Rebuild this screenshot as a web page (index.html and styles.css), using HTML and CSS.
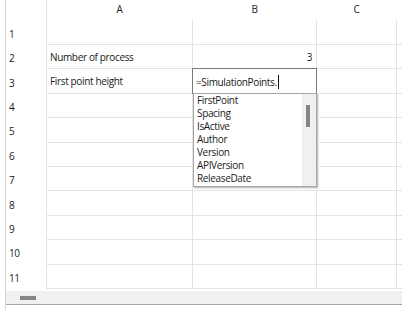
FILE: index.html
```html
<!DOCTYPE html>
<html>
<head>
<meta charset="utf-8">
<link rel="stylesheet" href="styles.css">
</head>
<body>
<div class="frame">
  <div class="sheet">
    <div class="row head">
      <div class="rh"></div>
      <div class="c ca">A</div>
      <div class="c cb">B</div>
      <div class="c cc">C</div>
      <div class="c cf"></div>
    </div>
    <div class="row r1">
      <div class="rh">1</div>
      <div class="c ca"></div>
      <div class="c cb"></div>
      <div class="c cc"></div>
      <div class="c cf"></div>
    </div>
    <div class="row">
      <div class="rh">2</div>
      <div class="c ca">Number of process</div>
      <div class="c cb num">3</div>
      <div class="c cc"></div>
      <div class="c cf"></div>
    </div>
    <div class="row">
      <div class="rh">3</div>
      <div class="c ca">First point height</div>
      <div class="c cb edit-host">
        <div class="editor">=SimulationPoints.<span class="caret"></span></div>
        <div class="dropdown">
          <ul class="items">
            <li>FirstPoint</li>
            <li>Spacing</li>
            <li>IsActive</li>
            <li>Author</li>
            <li>Version</li>
            <li>APIVersion</li>
            <li>ReleaseDate</li>
          </ul>
          <div class="track"><div class="thumb"></div></div>
        </div>
      </div>
      <div class="c cc"></div>
      <div class="c cf"></div>
    </div>
    <div class="row"><div class="rh">4</div><div class="c ca"></div><div class="c cb"></div><div class="c cc"></div><div class="c cf"></div></div>
    <div class="row"><div class="rh">5</div><div class="c ca"></div><div class="c cb"></div><div class="c cc"></div><div class="c cf"></div></div>
    <div class="row"><div class="rh">6</div><div class="c ca"></div><div class="c cb"></div><div class="c cc"></div><div class="c cf"></div></div>
    <div class="row"><div class="rh">7</div><div class="c ca"></div><div class="c cb"></div><div class="c cc"></div><div class="c cf"></div></div>
    <div class="row"><div class="rh">8</div><div class="c ca"></div><div class="c cb"></div><div class="c cc"></div><div class="c cf"></div></div>
    <div class="row"><div class="rh">9</div><div class="c ca"></div><div class="c cb"></div><div class="c cc"></div><div class="c cf"></div></div>
    <div class="row"><div class="rh">10</div><div class="c ca"></div><div class="c cb"></div><div class="c cc"></div><div class="c cf"></div></div>
    <div class="row"><div class="rh">11</div><div class="c ca"></div><div class="c cb"></div><div class="c cc"></div><div class="c cf"></div></div>
  </div>
  <div class="hscroll"><div class="hthumb"></div></div>
</div>
</body>
</html>
```
FILE: styles.css
```css
html, body {
  margin: 0;
  padding: 0;
  background: #ffffff;
}
body {
  width: 402px;
  height: 310px;
  overflow: hidden;
  font-family: "Open Sans", "Noto Sans", sans-serif;
  font-size: 10px;
  letter-spacing: -0.35px;
  color: #1a1a1a;
}
.frame {
  margin-left: 5px;
  border-left: 1px solid #d6d6d6;
  height: 310px;
  display: flex;
  flex-direction: column;
}
.sheet {
  display: flex;
  flex-direction: column;
  height: 291px;
  overflow: hidden;
}
.row {
  display: flex;
  height: 24.4px;
  flex: none;
}
.row.head {
  height: 20px;
}
.row.r1 {
  height: 25px;
}
.rh {
  flex: none;
  border-right: 1px solid #e3e3e3;
  display: flex;
  align-items: center;
  padding-left: 3px;
  box-sizing: border-box;
  width: 41px;
  padding-top: 2px;
}
.c {
  flex: none;
  box-sizing: border-box;
  border-right: 1px solid #e3e3e3;
  border-bottom: 1px solid #e3e3e3;
  display: flex;
  align-items: center;
  padding: 0 4px 0 3px;
  white-space: nowrap;
}
.ca { width: 146px; }
.cb { width: 124px; }
.cc { width: 80px; }
.cf { flex: 1; border-right: none; }
.head .c {
  border: none;
  justify-content: center;
  align-items: flex-start;
  padding-top: 2px;
}
.num {
  justify-content: flex-end;
}
.edit-host {
  position: relative;
}
.editor {
  position: absolute;
  left: -1px;
  top: -1px;
  width: 125px;
  height: 26px;
  box-sizing: border-box;
  border: 1px solid #7a7a7a;
  background: #fff;
  display: flex;
  align-items: center;
  padding-left: 3px;
  padding-top: 1px;
  z-index: 2;
}
.caret {
  display: inline-block;
  width: 1px;
  height: 14px;
  background: #111;
  margin-left: 1px;
}
.dropdown {
  position: absolute;
  left: 0px;
  top: 24px;
  width: 124px;
  height: 94px;
  box-sizing: border-box;
  border: 1px solid #a5a5a5;
  background: #fff;
  box-shadow: 1px 1px 0 #c8c8c8, 2px 2px 0 #e6e6e6;
  display: flex;
  z-index: 3;
}
.items {
  list-style: none;
  margin: 0;
  padding: 0 0 0 3px;
  flex: 1;
}
.items li {
  height: 13px;
  line-height: 13px;
}
.track {
  width: 14px;
  background: #f0f0f0;
  position: relative;
}
.thumb {
  position: absolute;
  left: 4px;
  top: 11px;
  width: 4px;
  height: 22px;
  background: #858585;
}
.hscroll {
  height: 13px;
  background: #f0f0f0;
  border-bottom: 1px solid #a8a8a8;
  display: flex;
  align-items: center;
}
.hthumb {
  margin-left: 14px;
  width: 16px;
  height: 4px;
  background: #858585;
}
```
